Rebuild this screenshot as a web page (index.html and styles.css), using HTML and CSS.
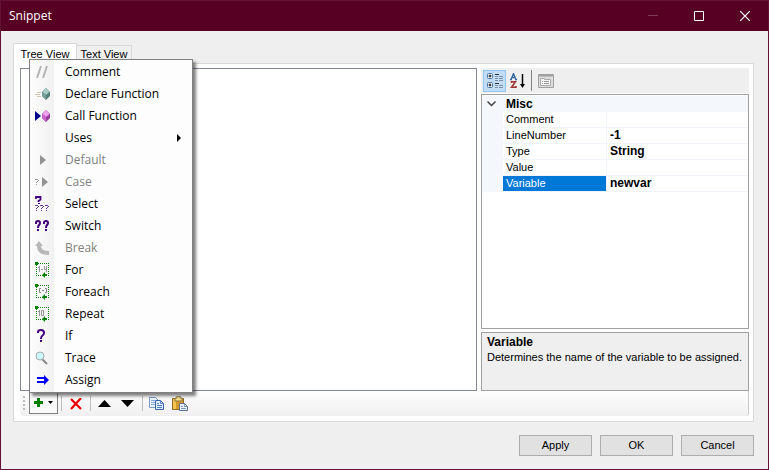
FILE: index.html
```html
<!DOCTYPE html>
<html lang="en">
<head>
<meta charset="utf-8">
<title>Snippet</title>
<link rel="stylesheet" href="styles.css">
</head>
<body>
<svg class="defs" aria-hidden="true">
  <defs>
    <g id="loop">
      <path d="M1 1.500h13M1 13.500h13M1.500 1v13M13.500 1v13" fill="none" stroke="#008000" stroke-dasharray="1 1"/>
      <path d="M0 0h3v3H0zM7 13l3-3v2h2v2h-2v2z" fill="#008000"/>
    </g>
    <path id="sq" d="M0 0h3v1H0zM3 1h1v1H3zM2 2h1v1H2zM1 3h1v1H1zM1 5h1v1H1z"/>
  </defs>
</svg>
<div class="window">
  <header class="titlebar">
    <h1>Snippet</h1>
    <button class="caption" aria-label="Minimize"><svg width="10" height="10"><path d="M0 4.500h10" stroke="#7d3b58"/></svg></button>
    <button class="caption" aria-label="Maximize"><svg width="10" height="10"><path d="M.5.5h9v9h-9z" fill="none" stroke="#fff"/></svg></button>
    <button class="caption" aria-label="Close"><svg width="10" height="10"><path d="M0 0l10 10M10 0L0 10" stroke="#fff" stroke-width="1.200"/></svg></button>
  </header>
  <main class="content">
    <div class="tabs" role="tablist">
      <button class="tab active" role="tab" aria-selected="true">Tree View</button>
      <button class="tab" role="tab" aria-selected="false">Text View</button>
    </div>
    <section class="page" role="tabpanel">
      <div class="panes">
        <div class="tree"></div>
        <aside class="inspector">
          <div class="inspector-tools">
            <button class="tool pressed" aria-label="Categorized"><svg width="16" height="16">
              <g fill="#fff" stroke="#4878a8"><rect x=".5" y=".5" width="5" height="5" rx="1"/><rect x=".5" y="9.500" width="5" height="5" rx="1"/></g>
              <path d="M1.500 3h3M3 1.500v3M1.500 12h3M3 10.500v3" stroke="#000"/>
              <path d="M8 1.500h4M8 10.500h4" stroke="#333"/><path d="M8 3.500h3M12 3.500h4M8 5.500h3M12 5.500h4M8 7.500h3M12 7.500h4M8 12.500h3M12 12.500h4M8 14.500h3M12 14.500h4" stroke="#7c91a8"/></svg></button>
            <button class="tool" aria-label="Alphabetical"><svg width="16" height="16">
              <path d="M1 6.500L3.500.5 6 6.500M2 4.500h3M0 6.500h2M5 6.500h2" fill="none" stroke="#34659c" stroke-width="1.300"/>
              <path d="M1.500 10V8.700h4l-4 5.600h4.500V13" fill="none" stroke="#9e3434" stroke-width="1.500"/>
              <path d="M12.500 1v12" stroke="#000" stroke-width="1.500"/><path d="M10 11h5l-2.500 4z"/></svg></button>
            <span class="rule"></span>
            <button class="tool" aria-label="Property Pages" disabled><svg width="16" height="16">
              <path d="M.5 1.500h15v13H.5z" fill="#dcdcdc" stroke="#a0a0a0"/><path d="M1 2.500h14" stroke="#a0a0a0" stroke-width="2"/>
              <path d="M2.500 12.500v-7h4v1h6v6z" fill="#f4f4f4" stroke="#aaa"/><path d="M4 8.500h1M6 8.500h5M4 10.500h1M6 10.500h5" stroke="#999"/></svg></button>
          </div>
          <div class="grid">
            <table>
              <colgroup><col class="gutter"><col class="name"><col></colgroup>
              <thead><tr><th class="fold"><svg width="9" height="6"><path d="M.5.5l4 4 4-4" fill="none" stroke="#444" stroke-width="1.500"/></svg></th><th colspan="2">Misc</th></tr></thead>
              <tbody>
                <tr><td></td><td>Comment</td><td></td></tr>
                <tr><td></td><td>LineNumber</td><td>-1</td></tr>
                <tr><td></td><td>Type</td><td>String</td></tr>
                <tr><td></td><td>Value</td><td></td></tr>
                <tr class="selected"><td></td><td>Variable</td><td>newvar</td></tr>
              </tbody>
            </table>
          </div>
          <div class="help"><h2>Variable</h2><p>Determines the name of the variable to be assigned.</p></div>
        </aside>
      </div>
      <div class="toolbar" role="toolbar">
        <span class="grip"></span>
        <div class="dropdown">
          <button class="add" aria-label="Add" aria-expanded="true">
            <svg width="9" height="9"><path d="M3 0h3v3h3v3H6v3H3V6H0V3h3z" fill="#008000"/></svg>
            <svg width="5" height="3"><path d="M0 0h5L2.500 3z"/></svg>
          </button>
          <ul class="menu" role="menu">
            <li><button role="menuitem"><svg width="16" height="16"><path d="M2 14L6 2M8 14l4-12" stroke="#b5b5b5" stroke-width="2"/></svg>Comment</button></li>
            <li><button role="menuitem"><svg width="16" height="16"><path d="M2 6.500h4M0 8.500h5M2 10.500h4" stroke="#d1c9a7"/><path d="M11 2l4 4v4l-4 4-4-4V6z" fill="#527f78"/><path d="M11 2l3.500 4-3.500 3L7.500 6z" fill="#a8cbc4"/><path d="M7 6l4 3v5l-4-4z" fill="#769f98"/></svg>Declare Function</button></li>
            <li><button role="menuitem"><svg width="16" height="16"><path d="M0 3l6 5-6 5z" fill="#00008b"/><path d="M11 2l4 4v4l-4 4-4-4V6z" fill="#963c99"/><path d="M11 2l3.500 4-3.500 3L7.500 6z" fill="#f0a0ef"/><path d="M7 6l4 3v5l-4-4z" fill="#ce62cd"/></svg>Call Function</button></li>
            <li><button role="menuitem" aria-haspopup="true"><svg width="16" height="16"></svg>Uses<svg class="more" width="4" height="8"><path d="M0 0l4 4-4 4z"/></svg></button></li>
            <li><button role="menuitem" disabled><svg width="16" height="16"><path d="M5 3l6 5-6 5z" fill="#929292"/></svg>Default</button></li>
            <li><button role="menuitem" disabled><svg width="16" height="16"><use href="#sq" y="5" fill="#999"/><path d="M7 3l6 5-6 5z" fill="#929292"/></svg>Case</button></li>
            <li><button role="menuitem"><svg width="16" height="16"><path d="M1 3V1h4.500V3.500L3.500 5V6" fill="none" stroke="#42007c" stroke-width="1.800"/><path d="M3 7h2v1H3z" fill="#42007c"/><g fill="#6a3b94"><use href="#sq" x="0" y="9"/><use href="#sq" x="5" y="9"/><use href="#sq" x="10" y="9"/></g></svg>Select</button></li>
            <li><button role="menuitem"><svg width="16" height="16"><path d="M1 6V4.500Q1 3 3 3T5 5Q5 6 4 7T3 10M9 6V4.500Q9 3 11 3T13 5Q13 6 12 7T11 10" fill="none" stroke="#42007c" stroke-width="2"/><path d="M2 11h2v2H2zM10 11h2v2h-2z" fill="#42007c"/></svg>Switch</button></li>
            <li><button role="menuitem" disabled><svg width="16" height="16"><path d="M0 6l4-5 4 5H6q0 5 8 5v4Q2 15 2 6z" fill="#b8b8b8"/></svg>Break</button></li>
            <li><button role="menuitem"><svg width="16" height="16"><use href="#loop"/><path d="M3 5.500h1.500M4.500 4v6M6 7.500h2M9.500 4v3.500h2M11.500 4v6" fill="none" stroke="#999"/></svg>For</button></li>
            <li><button role="menuitem"><svg width="16" height="16"><use href="#loop"/><path d="M6 4.500H4.500v4H6M7 6.500h2M10 4.500h1.500v4H10" fill="none" stroke="#888"/></svg>Foreach</button></li>
            <li><button role="menuitem"><svg width="16" height="16"><use href="#loop"/><path d="M3 5.500h1.500M4.500 4v6M6.500 4.500h2v5h-2z" fill="none" stroke="#999"/></svg>Repeat</button></li>
            <li><button role="menuitem"><svg width="16" height="16"><path d="M3 5V4q0-2 3-2T9 5q0 1.500-1.500 2.500T6 11" fill="none" stroke="#42007c" stroke-width="2"/><path d="M5 12h2v2H5z" fill="#42007c"/></svg>If</button></li>
            <li><button role="menuitem"><svg width="16" height="16"><path d="M7 9l5 5" stroke="#888" stroke-width="2"/><circle cx="5" cy="6" r="4" fill="#cdf8fa" stroke="#a3adad"/></svg>Trace</button></li>
            <li><button role="menuitem"><svg width="16" height="16"><path d="M2 5h6v2H2zM2 9h6v2H2zM9 3l5 5-5 5z" fill="#0000f5"/><path d="M8 5h2v2H8zM8 9h2v2H8z" fill="#0000f5"/></svg>Assign</button></li>
          </ul>
        </div>
        <span class="rule"></span>
        <button class="tool" aria-label="Delete"><svg width="12" height="12"><path d="M1 1l10 10M11 0L1 11" stroke="#f00000" stroke-width="2.200"/></svg></button>
        <span class="rule"></span>
        <button class="tool" aria-label="Move up"><svg width="13" height="7"><path d="M0 7l6.500-7L13 7z"/></svg></button>
        <button class="tool" aria-label="Move down"><svg width="13" height="7"><path d="M0 0h13L6.500 7z"/></svg></button>
        <span class="rule"></span>
        <button class="tool" aria-label="Copy"><svg width="16" height="16">
          <path d="M.5 1.500h6l3 3v7h-9z" fill="#eef4fc" stroke="#7a9bd0"/><path d="M2 4.500h4M2 6.500h4M2 8.500h4" stroke="#86a8dc"/>
          <path d="M6.500 4.500h5l3 3v6h-8z" fill="#e2edfb" stroke="#3d62ae"/><path d="M11.500 4.500v3h3M8 7.500h2M8 9.500h5M8 11.500h5" fill="none" stroke="#5682c4"/></svg></button>
        <button class="tool" aria-label="Paste"><svg width="16" height="16">
          <path d="M.5 2.500h11v11H.5z" fill="#d49a28" stroke="#8f6820"/><path d="M1 3h3v10H1z" fill="#f3c14e"/><path d="M3 2h2V0h3v2h2v3H3z" fill="#f2df8c" stroke="#8d7540"/>
          <path d="M7.500 7.500h5l3 3v4h-8z" fill="#e8f1fb" stroke="#5d6f8d"/><path d="M12.500 7.500v3h3M9 10.500h2M9 12.500h5" fill="none" stroke="#7895b8"/></svg></button>
      </div>
    </section>
    <footer class="actions">
      <button>Apply</button><button>OK</button><button>Cancel</button>
    </footer>
  </main>
</div>
</body>
</html>
```
FILE: styles.css
```css
* { box-sizing: border-box; }
body { margin: 0; font: 11px/13px "Liberation Sans", Arial, sans-serif; color: #000; }
button { font: inherit; color: inherit; padding: 0; border: 0; background: none; }
h1, h2, p, ul { margin: 0; padding: 0; font-size: inherit; }
svg { flex: none; display: block; }
.defs { position: absolute; width: 0; height: 0; }

.window { min-height: 100vh; display: flex; flex-direction: column; border: 1px solid #651239; background: #efefef; }
.titlebar { display: flex; height: 30px; padding-left: 8px; align-items: center; background: #570024; color: #fff; }
.titlebar h1 { flex: 1; font: 12px/16px "Open Sans", sans-serif; }
.caption { width: 46px; height: 30px; display: grid; place-items: center; }

.content { flex: 1; display: flex; flex-direction: column; padding: 12px 14px 13px 12px; }
.tabs { display: flex; align-items: flex-end; height: 20px; }
.tab { height: 18px; width: 55px; border: 1px solid #d9d9d9; border-left: 0; border-bottom: 0; background: #f0f0f0; }
.tab.active { height: 21px; width: 64px; margin-bottom: -1px; border-left: 1px solid #d9d9d9; background: #fff; position: relative; }
.page { flex: 1; display: flex; flex-direction: column; padding: 4px 4px 5px 6px; border: 1px solid #d9d9d9; background: #fff; }
.panes { flex: 1; display: flex; gap: 4px; }
.tree { flex: 1; border: 1px solid #828790; background: #fff; }

.inspector { width: 268px; display: flex; flex-direction: column; }
.inspector-tools { display: flex; align-items: center; height: 25px; padding: 0 2px; background: #efefef; }
.tool { display: grid; place-items: center; width: 23px; height: 22px; }
.tool.pressed { background: #c1dcf3; border: 1px solid #90c8f6; }
.inspector-tools .rule { width: 1px; height: 21px; margin: 0 2px; background: #858585; }
.grid { flex: 1; margin: 1px 0 3px; padding-top: 1px; border: 1px solid #a0a0a0; background: #fff; }
table { width: 100%; table-layout: fixed; border-spacing: 0; }
.gutter { width: 21px; }
.name { width: 103px; }
tr { height: 16px; }
td, th { padding: 0 3px; text-align: left; line-height: 15px; white-space: nowrap; }
th, td:first-child { background: #f4f7fc; }
th { padding-top: 1px; }
tbody td + td { border-bottom: 1px solid #f0f3f9; }
td:last-child, th, h2 { font-size: 12px; font-weight: bold; }
td:last-child { border-left: 1px solid #f0f3f9; }
.fold { padding: 0 5px; }
.selected td:nth-child(2) { background: #0078d7; color: #fff; }
.help { height: 59px; padding: 2px 5px; border: 1px solid #a0a0a0; background: #efefef; }
.help h2 { line-height: 14px; }
.help p { line-height: 16px; }

.toolbar { display: flex; align-items: center; height: 25px; padding-left: 3px; background: linear-gradient(#fefefe, #f0f0f0); border-right: 1px solid #c8c8c8; border-radius: 0 0 3px 3px; }
.grip { width: 2px; height: 15px; margin-right: 4px; background: repeating-linear-gradient(#bbb 0 2px, transparent 2px 4px); }
.toolbar .rule { width: 1px; height: 15px; margin: 0 2px 0 3px; background: #bdbdbd; }
.dropdown { position: relative; align-self: flex-start; }
.add { display: flex; align-items: center; justify-content: center; gap: 5px; width: 29px; height: 23px; border: 1px solid #808080; border-top: 0; background: #fafafa; }
.menu { position: absolute; z-index: 2; left: 0; bottom: calc(100% - 2px); width: 164px; padding: 1px 0; list-style: none; border: 1px solid #808080; background: linear-gradient(90deg, #fcfcfc, #f1f1f1 24px, #fdfdfd 24px); box-shadow: 3px 3px 3px rgba(0, 0, 0, .5); }
.menu button { display: flex; align-items: center; width: 100%; height: 22px; padding: 0 11px 0 5px; gap: 14px; text-align: left; font: 12px/16px "Open Sans", sans-serif; }
.menu button:disabled { color: #808080; }
.more { margin-left: auto; }

.actions { display: flex; justify-content: flex-end; gap: 8px; margin-top: 13px; }
.actions button { width: 73px; height: 21px; border: 1px solid #adadad; background: #e1e1e1; }
```
